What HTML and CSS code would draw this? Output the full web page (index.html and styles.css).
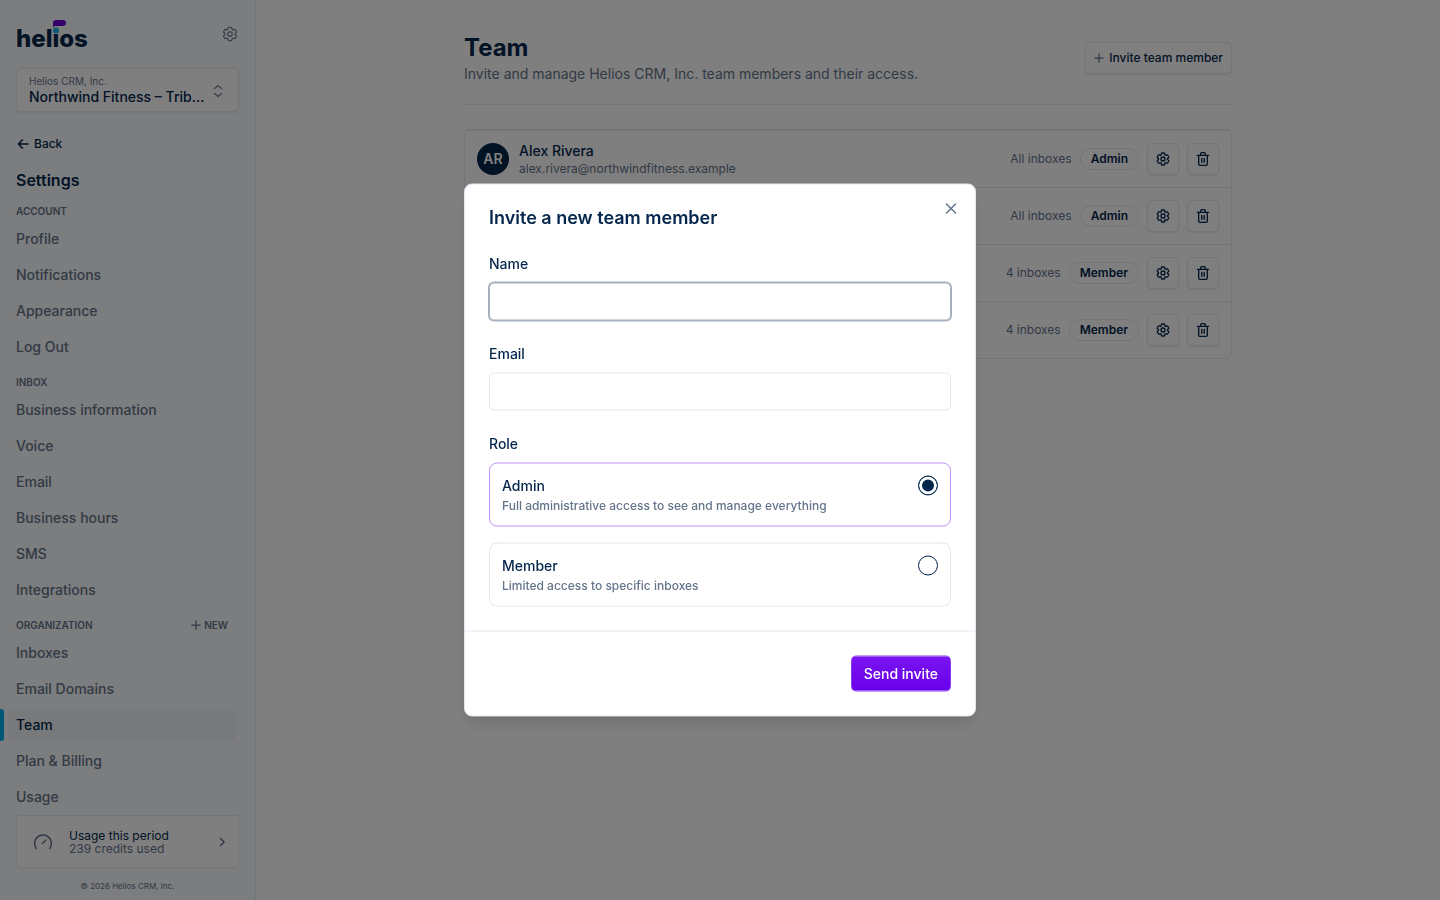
FILE: index.html
```html
<!DOCTYPE html>
<html lang="en">
<head>
    <meta charset="UTF-8">
    <meta name="viewport" content="width=device-width, initial-scale=1.0">
    <title>Team - Helios CRM</title>
    <link rel="stylesheet" href="styles.css">
</head>
<body>
    <!-- Shared icons -->
    <svg class="sprite" aria-hidden="true">
        <symbol id="icon-gear" viewBox="0 0 24 24">
            <path d="M9.594 3.94c.09-.542.56-.94 1.11-.94h2.593c.55 0 1.02.398 1.11.94l.213 1.281c.063.374.313.686.645.87.074.04.147.083.22.127.325.196.72.257 1.075.124l1.217-.456a1.125 1.125 0 0 1 1.37.49l1.296 2.247a1.125 1.125 0 0 1-.26 1.431l-1.003.827c-.293.241-.438.613-.43.992a7.723 7.723 0 0 1 0 .255c-.008.378.137.75.43.991l1.004.827c.424.35.534.955.26 1.43l-1.298 2.247a1.125 1.125 0 0 1-1.369.491l-1.217-.456c-.355-.133-.75-.072-1.076.124a6.47 6.47 0 0 1-.22.128c-.331.183-.581.495-.644.869l-.213 1.281c-.09.543-.56.94-1.11.94h-2.594c-.55 0-1.019-.398-1.11-.94l-.213-1.281c-.062-.374-.312-.686-.644-.87a6.52 6.52 0 0 1-.22-.127c-.325-.196-.72-.257-1.076-.124l-1.217.456a1.125 1.125 0 0 1-1.369-.49l-1.297-2.247a1.125 1.125 0 0 1 .26-1.431l1.004-.827c.292-.24.437-.613.43-.991a6.932 6.932 0 0 1 0-.255c.007-.38-.138-.751-.43-.992l-1.004-.827a1.125 1.125 0 0 1-.26-1.43l1.297-2.247a1.125 1.125 0 0 1 1.37-.491l1.216.456c.356.133.751.072 1.076-.124.072-.044.146-.086.22-.128.332-.183.582-.495.644-.869l.214-1.28Z"/>
            <circle cx="12" cy="12" r="3"/>
        </symbol>
        <symbol id="icon-trash" viewBox="0 0 24 24">
            <path d="M3.5 6.5h17M8.5 6.500V4.200c0-1 .7-1.700 1.700-1.700h3.600c1 0 1.700.7 1.700 1.700v2.300M5.500 6.500v13c0 1.200.8 2 2 2h9c1.200 0 2-.8 2-2V6.500M10.200 11v6M13.800 11v6"/>
        </symbol>
        <symbol id="icon-plus" viewBox="0 0 12 12">
            <path d="M6 1v10M1 6h10"/>
        </symbol>
    </svg>

    <div class="app">
        <aside class="sidebar">
            <div class="sidebar-top">
                <a class="logo" href="#">helios
                    <svg class="logo-mark" viewBox="0 0 14 16">
                        <circle cx="4" cy="10.500" r="3" fill="#18b4ea"/>
                        <path d="M1 7V3a3 3 0 0 1 3-3H11a3 3 0 0 1 0 6H3Z" fill="#6b00d6"/>
                    </svg>
                </a>
                <button class="icon-plain" aria-label="Preferences"><svg class="icon icon-18"><use href="#icon-gear"/></svg></button>
            </div>

            <button class="switcher">
                <span class="switcher-text">
                    <span class="switcher-org">Helios CRM, Inc.</span>
                    <span class="switcher-name">Northwind Fitness – Trib…</span>
                </span>
                <svg class="icon icon-16" viewBox="0 0 16 16"><path d="M4.500 5.500 8 2.500l3.500 3M4.500 10.500l3.500 3 3.500-3"/></svg>
            </button>

            <a class="back" href="#">
                <svg class="icon icon-14" viewBox="0 0 14 14"><path d="M12 7H2.500M6.500 2.800 2.300 7l4.200 4.200"/></svg>
                Back
            </a>

            <h2 class="sidebar-title">Settings</h2>

            <nav class="nav">
                <h3 class="nav-heading">Account</h3>
                <a class="nav-link" href="#">Profile</a>
                <a class="nav-link" href="#">Notifications</a>
                <a class="nav-link" href="#">Appearance</a>
                <a class="nav-link" href="#">Log Out</a>

                <h3 class="nav-heading">Inbox</h3>
                <a class="nav-link" href="#">Business information</a>
                <a class="nav-link" href="#">Voice</a>
                <a class="nav-link" href="#">Email</a>
                <a class="nav-link" href="#">Business hours</a>
                <a class="nav-link" href="#">SMS</a>
                <a class="nav-link" href="#">Integrations</a>

                <div class="nav-heading-row">
                    <h3 class="nav-heading">Organization</h3>
                    <button class="nav-new"><svg class="icon icon-10"><use href="#icon-plus"/></svg>New</button>
                </div>
                <a class="nav-link" href="#">Inboxes</a>
                <a class="nav-link" href="#">Email Domains</a>
                <a class="nav-link active" href="#">Team</a>
                <a class="nav-link" href="#">Plan &amp; Billing</a>
                <a class="nav-link" href="#">Usage</a>
            </nav>

            <div class="sidebar-bottom">
                <a class="usage" href="#">
                    <svg class="icon icon-20" viewBox="0 0 20 20"><path d="M3.400 16.500a8.400 8.400 0 1 1 13.200 0M9.500 11.500l3.500-3.500"/></svg>
                    <span class="usage-text">
                        <span class="usage-title">Usage this period</span>
                        <span>239 credits used</span>
                    </span>
                    <svg class="icon icon-12" viewBox="0 0 12 12"><path d="M4.500 2.500 8 6l-3.500 3.500"/></svg>
                </a>
                <p class="copyright">© 2026 Helios CRM, Inc.</p>
            </div>
        </aside>

        <main class="main">
            <div class="content">
                <header class="page-header">
                    <div>
                        <h1>Team</h1>
                        <p>Invite and manage Helios CRM, Inc. team members and their access.</p>
                    </div>
                    <button class="btn-outline"><svg class="icon icon-10"><use href="#icon-plus"/></svg>Invite team member</button>
                </header>

                <ul class="members">
                    <li class="member">
                        <span class="avatar">AR</span>
                        <div class="member-info">
                            <div class="member-name">Alex Rivera</div>
                            <div class="member-email">alex.rivera@northwindfitness.example</div>
                        </div>
                        <div class="member-actions">
                            <span>All inboxes</span>
                            <span class="badge">Admin</span>
                            <button class="btn-icon" aria-label="Edit member"><svg class="icon icon-16"><use href="#icon-gear"/></svg></button>
                            <button class="btn-icon" aria-label="Remove member"><svg class="icon icon-16"><use href="#icon-trash"/></svg></button>
                        </div>
                    </li>
                    <li class="member">
                        <div class="member-actions">
                            <span>All inboxes</span>
                            <span class="badge">Admin</span>
                            <button class="btn-icon" aria-label="Edit member"><svg class="icon icon-16"><use href="#icon-gear"/></svg></button>
                            <button class="btn-icon" aria-label="Remove member"><svg class="icon icon-16"><use href="#icon-trash"/></svg></button>
                        </div>
                    </li>
                    <li class="member">
                        <div class="member-actions">
                            <span>4 inboxes</span>
                            <span class="badge">Member</span>
                            <button class="btn-icon" aria-label="Edit member"><svg class="icon icon-16"><use href="#icon-gear"/></svg></button>
                            <button class="btn-icon" aria-label="Remove member"><svg class="icon icon-16"><use href="#icon-trash"/></svg></button>
                        </div>
                    </li>
                    <li class="member">
                        <div class="member-actions">
                            <span>4 inboxes</span>
                            <span class="badge">Member</span>
                            <button class="btn-icon" aria-label="Edit member"><svg class="icon icon-16"><use href="#icon-gear"/></svg></button>
                            <button class="btn-icon" aria-label="Remove member"><svg class="icon icon-16"><use href="#icon-trash"/></svg></button>
                        </div>
                    </li>
                </ul>
            </div>
        </main>
    </div>

    <div class="overlay"></div>

    <form class="modal" role="dialog" aria-labelledby="modal-title">
        <div class="modal-body">
            <h2 id="modal-title">Invite a new team member</h2>
            <button type="button" class="modal-close" aria-label="Close">
                <svg class="icon icon-16" viewBox="0 0 16 16"><path d="m3.500 3.500 9 9M12.500 3.500l-9 9"/></svg>
            </button>
            <div class="form-group">
                <label for="name">Name</label>
                <input type="text" id="name" class="focused">
            </div>
            <div class="form-group">
                <label for="email">Email</label>
                <input type="email" id="email">
            </div>
            <fieldset class="form-group">
                <legend>Role</legend>
                <div class="roles">
                    <label class="role" for="role-admin">
                        <span class="role-text">
                            <span class="role-name">Admin</span>
                            <span class="role-desc">Full administrative access to see and manage everything</span>
                        </span>
                        <input type="radio" id="role-admin" name="role" checked>
                    </label>
                    <label class="role" for="role-member">
                        <span class="role-text">
                            <span class="role-name">Member</span>
                            <span class="role-desc">Limited access to specific inboxes</span>
                        </span>
                        <input type="radio" id="role-member" name="role">
                    </label>
                </div>
            </fieldset>
        </div>
        <div class="modal-footer">
            <button type="submit" class="btn-primary">Send invite</button>
        </div>
    </form>
</body>
</html>
```
FILE: styles.css
```css
* {
    box-sizing: border-box;
}
body {
    margin: 0;
    font-family: Inter, "Liberation Sans", sans-serif;
    font-size: 14px;
    line-height: 20px;
    color: #04264c;
    background-color: #fff;
}
h1, h2, h3, p, ul {
    margin: 0;
    padding: 0;
}
a {
    color: inherit;
    text-decoration: none;
}
button {
    font: inherit;
    color: inherit;
    cursor: pointer;
}
.sprite {
    position: absolute;
    width: 0;
    height: 0;
}
.icon {
    flex: none;
    display: block;
    fill: none;
    stroke: currentColor;
    stroke-width: 1.5;
    stroke-linecap: round;
    stroke-linejoin: round;
}
.icon-10 { width: 10px; height: 10px; }
.icon-12 { width: 12px; height: 12px; }
.icon-14 { width: 14px; height: 14px; }
.icon-16 { width: 16px; height: 16px; }
.icon-18 { width: 18px; height: 18px; }
.icon-20 { width: 20px; height: 20px; }

/* Layout */
.app {
    display: flex;
    min-height: 100vh;
}
.main {
    flex: 1;
    padding: 32px 24px;
}
.content {
    max-width: 768px;
    margin: 0 auto;
}

/* Sidebar */
.sidebar {
    display: flex;
    flex-direction: column;
    width: 256px;
    padding: 20px 16px 0;
    background-color: #f8fafc;
    border-right: 1px solid #e2e8f0;
}
.sidebar-top {
    display: flex;
    justify-content: space-between;
    align-items: center;
    height: 28px;
    margin-bottom: 20px;
}
.logo {
    position: relative;
    padding-top: 10px;
    font-size: 24px;
    font-weight: 800;
    line-height: 28px;
}
.logo-mark {
    position: absolute;
    left: 36px;
    top: 5px;
    width: 14px;
    height: 16px;
}
.icon-plain {
    padding: 0;
    border: none;
    background: none;
    color: #64748b;
}
.switcher {
    display: flex;
    align-items: center;
    justify-content: space-between;
    width: 100%;
    height: 44px;
    padding: 2px 12px 0;
    text-align: left;
    background-color: #fff;
    border: 1px solid #e2e8f0;
    border-radius: 5px;
    box-shadow: 0 1px 2px rgba(0, 0, 0, 0.08);
    color: #64748b;
}
.switcher .icon {
    color: #7f8ba0;
}
.switcher-text {
    display: flex;
    flex-direction: column;
    white-space: nowrap;
}
.switcher-org {
    font-size: 10px;
    line-height: 12px;
}
.switcher-name {
    font-weight: 500;
    color: #04264c;
}
.back {
    display: flex;
    align-items: center;
    gap: 4px;
    margin-top: 22px;
    font-size: 12px;
    font-weight: 500;
}
.sidebar-title {
    margin: 14px 0 11px;
    font-size: 16px;
    font-weight: 600;
    line-height: 24px;
}
.nav {
    display: flex;
    flex-direction: column;
    gap: 4px;
    margin: 0 3px 0 -8px;
}
.nav-heading {
    padding: 0 8px;
    font-size: 10px;
    font-weight: 600;
    line-height: 16px;
    text-transform: uppercase;
    color: #64748b;
}
.nav-link + .nav-heading,
.nav-heading-row {
    margin-top: 7px;
}
.nav-heading-row {
    display: flex;
    justify-content: space-between;
    padding-right: 8px;
}
.nav-new {
    display: flex;
    align-items: center;
    gap: 3px;
    padding: 0;
    border: none;
    background: none;
    font-size: 10px;
    font-weight: 600;
    line-height: 16px;
    text-transform: uppercase;
    color: #64748b;
}
.nav-link {
    position: relative;
    padding: 6px 8px;
    border-radius: 6px;
    font-weight: 500;
    color: #64748b;
}
.nav-link.active {
    background-color: #f1f3f6;
    color: #04264c;
}
.nav-link.active::before {
    content: "";
    position: absolute;
    left: -8px;
    top: 0;
    bottom: 0;
    width: 4px;
    border-radius: 0 3px 3px 0;
    background-color: #00b0f0;
}
.sidebar-bottom {
    margin-top: auto;
}
.usage {
    display: flex;
    align-items: center;
    gap: 16px;
    height: 53px;
    padding: 0 10px 0 16px;
    font-size: 12px;
    line-height: 13px;
    background-color: #fff;
    border: 1px solid #e2e8f0;
    border-radius: 3px;
    color: #64748b;
}
.usage-text {
    display: flex;
    flex-direction: column;
    flex: 1;
}
.usage-title {
    color: #04264c;
}
.copyright {
    padding: 8px 0 4px;
    font-size: 8px;
    line-height: 20px;
    text-align: center;
    color: #64748b;
}

/* Team page */
.page-header {
    display: flex;
    justify-content: space-between;
    align-items: center;
    padding-bottom: 20px;
    margin-bottom: 24px;
    border-bottom: 1px solid #e2e8f0;
}
.page-header h1 {
    font-size: 24px;
    font-weight: 700;
    line-height: 32px;
}
.page-header p {
    color: #64748b;
}
.btn-outline {
    display: flex;
    align-items: center;
    gap: 5px;
    height: 32px;
    padding: 0 8px;
    font-size: 12px;
    font-weight: 500;
    background-color: #fff;
    border: 1px solid #e2e8f0;
    border-radius: 5px;
    box-shadow: 0 1px 2px rgba(0, 0, 0, 0.08);
}
.btn-outline .icon,
.nav-new .icon {
    color: #64748b;
}
.members {
    list-style: none;
    border: 1px solid #e2e8f0;
    border-radius: 6px;
}
.member {
    display: flex;
    align-items: center;
    gap: 10px;
    height: 57px;
    padding: 0 12px;
    border-top: 1px solid #e2e8f0;
}
.avatar {
    display: flex;
    align-items: center;
    justify-content: center;
    width: 32px;
    height: 32px;
    border-radius: 50%;
    background-color: #04264c;
    color: #fff;
    font-weight: 600;
}
.member-name {
    font-weight: 500;
}
.member-email {
    font-size: 12px;
    line-height: 16px;
    color: #64748b;
}
.member-actions {
    display: flex;
    align-items: center;
    gap: 8px;
    margin-left: auto;
    font-size: 12px;
    color: #64748b;
}
.badge {
    padding: 0 10px;
    border: 1px solid #e2e8f0;
    border-radius: 11px;
    font-weight: 600;
    color: #04264c;
}
.btn-icon {
    display: flex;
    align-items: center;
    justify-content: center;
    width: 32px;
    height: 32px;
    padding: 0;
    background-color: #fff;
    border: 1px solid #e2e8f0;
    border-radius: 5px;
    box-shadow: 0 1px 2px rgba(0, 0, 0, 0.08);
    color: #04264c;
}
.btn-icon .icon {
    stroke-width: 2;
}

/* Invite modal */
.overlay {
    position: fixed;
    inset: 0;
    background-color: rgba(0, 0, 0, 0.5);
}
.modal {
    position: fixed;
    left: 50%;
    top: 50%;
    transform: translate(-50%, -50%);
    width: 100%;
    max-width: 512px;
    background-color: #fff;
    border: 1px solid #e2e8f0;
    border-radius: 8px;
    box-shadow: 0 10px 15px -3px rgba(0, 0, 0, 0.1), 0 4px 6px -4px rgba(0, 0, 0, 0.1);
}
.modal-body {
    padding: 24px;
}
.modal h2 {
    margin-bottom: 28px;
    font-size: 18px;
    font-weight: 600;
    line-height: 18px;
}
.modal-close {
    position: absolute;
    right: 16px;
    top: 16px;
    padding: 0;
    border: none;
    background: none;
    color: #64748b;
}
.form-group {
    margin: 0;
    padding: 0;
    border: none;
}
.form-group + .form-group {
    margin-top: 24px;
}
.form-group > label,
.form-group legend {
    display: block;
    margin-bottom: 10px;
    padding: 0;
    font-weight: 500;
    line-height: 18px;
}
input[type="text"],
input[type="email"] {
    display: block;
    width: 100%;
    height: 38px;
    padding: 0 12px;
    font: inherit;
    color: inherit;
    border: 1px solid #e2e8f0;
    border-radius: 5px;
    outline: none;
}
input.focused {
    border-color: #a6b0bf;
    box-shadow: 0 0 0 1px #a6b0bf;
}
.roles {
    display: flex;
    flex-direction: column;
    gap: 16px;
}
.role {
    display: flex;
    justify-content: space-between;
    align-items: flex-start;
    padding: 12px;
    border: 1px solid #e2e8f0;
    border-radius: 8px;
    cursor: pointer;
}
.role:has(input:checked) {
    border-color: #c391f7;
}
.role-text {
    display: flex;
    flex-direction: column;
    gap: 2px;
}
.role-name {
    font-weight: 500;
}
.role-desc {
    font-size: 12px;
    font-weight: 500;
    line-height: 16px;
    color: #64748b;
}
input[type="radio"] {
    appearance: none;
    width: 20px;
    height: 20px;
    margin: 0;
    border: 1px solid #04264c;
    border-radius: 50%;
}
input[type="radio"]:checked {
    background-color: #04264c;
    box-shadow: inset 0 0 0 3px #fff;
}
.modal-footer {
    display: flex;
    justify-content: flex-end;
    padding: 24px;
    border-top: 1px solid #e2e8f0;
}
.btn-primary {
    height: 36px;
    padding: 0 12px;
    font-weight: 500;
    color: #fff;
    background: linear-gradient(#7a14ee, #6900ec);
    border: 1px solid #8a3af2;
    border-radius: 5px;
}
```
